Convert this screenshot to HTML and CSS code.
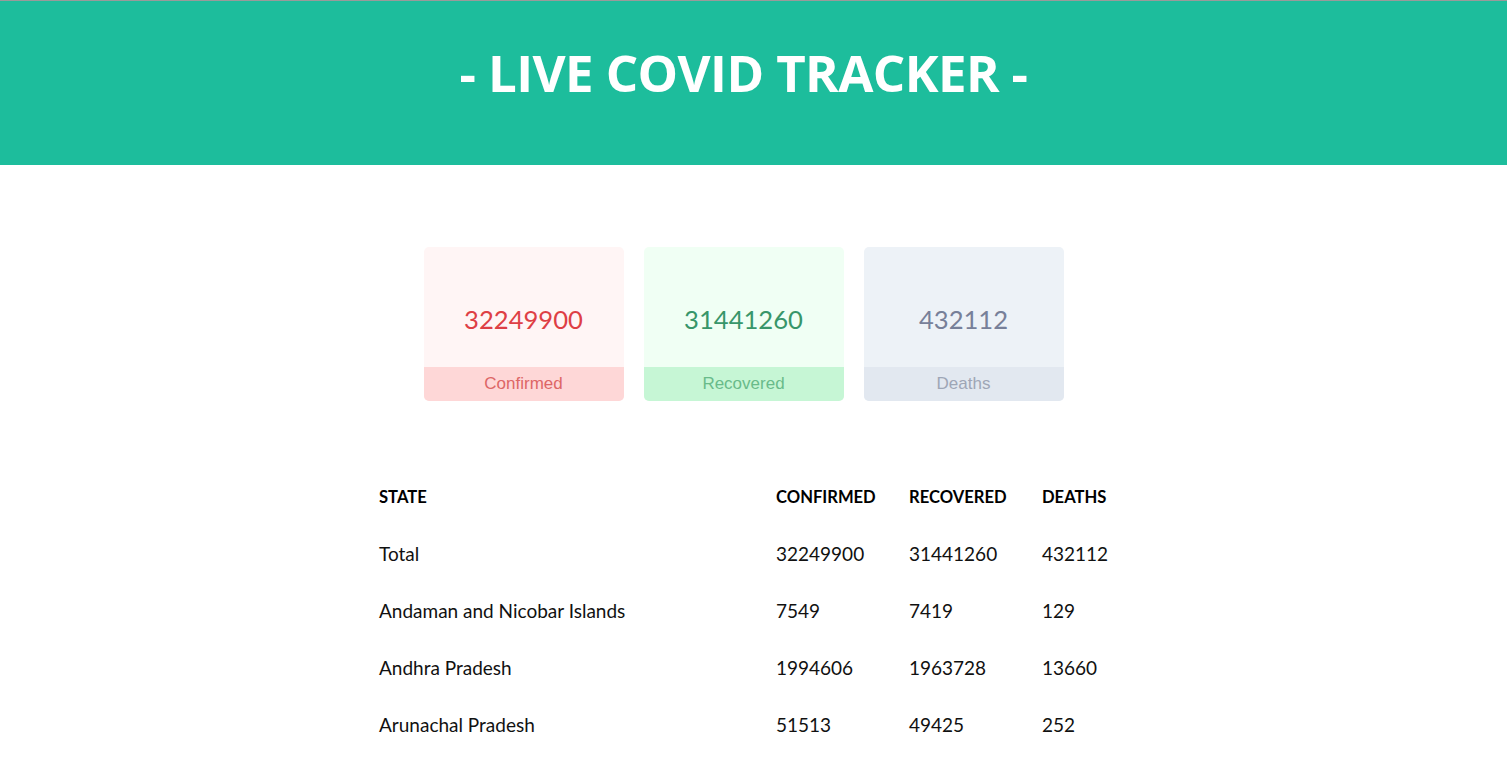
FILE: index.html
```html
<!DOCTYPE html>
<html lang="en">
<head>
<meta charset="utf-8">
<title>Live Covid Tracker</title>
<link rel="stylesheet" href="styles.css">
</head>
<body>
<header class="hero">
  <h1 class="hero-title">- LIVE COVID TRACKER -</h1>
</header>
<main class="content">
  <section class="cards">
    <div class="card card-red">
      <div class="card-value">32249900</div>
      <div class="card-label">Confirmed</div>
    </div>
    <div class="card card-green">
      <div class="card-value">31441260</div>
      <div class="card-label">Recovered</div>
    </div>
    <div class="card card-gray">
      <div class="card-value">432112</div>
      <div class="card-label">Deaths</div>
    </div>
  </section>
  <table class="states">
    <colgroup>
      <col class="col-state"><col class="col-num"><col class="col-num"><col class="col-last">
    </colgroup>
    <thead>
      <tr><th>STATE</th><th>CONFIRMED</th><th>RECOVERED</th><th>DEATHS</th></tr>
    </thead>
    <tbody>
      <tr><td>Total</td><td>32249900</td><td>31441260</td><td>432112</td></tr>
      <tr><td>Andaman and Nicobar Islands</td><td>7549</td><td>7419</td><td>129</td></tr>
      <tr><td>Andhra Pradesh</td><td>1994606</td><td>1963728</td><td>13660</td></tr>
      <tr><td>Arunachal Pradesh</td><td>51513</td><td>49425</td><td>252</td></tr>
    </tbody>
  </table>
</main>
</body>
</html>
```

FILE: styles.css
```css
html, body {
  margin: 0;
  padding: 0;
}
body {
  font-family: "Lato", "Liberation Sans", sans-serif;
  color: #111;
  background: #fff;
  border-top: 1px solid #9a9a9a;
}
.hero {
  background: #1dbd9c;
  height: 164px;
  padding-right: 20px;
  display: flex;
  align-items: flex-start;
  justify-content: center;
}
.hero-title {
  margin: 36px 0 0;
  color: #fff;
  font-family: "Open Sans", "Liberation Sans", sans-serif;
  font-weight: 700;
  font-size: 51px;
  line-height: 70px;
  letter-spacing: -0.6px;
}
.content {
  padding-right: 20px;
  padding-bottom: 20px;
  display: flex;
  flex-direction: column;
  align-items: center;
}
.cards {
  display: flex;
  gap: 20px;
  margin-top: 82px;
}
.card {
  width: 200px;
  height: 154px;
  border-radius: 5px;
  overflow: hidden;
  display: flex;
  flex-direction: column;
}
.card-value {
  flex: 1;
  display: flex;
  align-items: flex-end;
  justify-content: center;
  padding-bottom: 33px;
  font-size: 25.6px;
  line-height: 30px;
}
.card-label {
  height: 34px;
  display: flex;
  align-items: center;
  justify-content: center;
  font-family: "Liberation Sans", Arial, sans-serif;
  font-size: 17px;
}
.card-red { background: #fff5f5; }
.card-red .card-value { color: #de3f45; }
.card-red .card-label { background: #fed7d7; color: #dd6666; }
.card-green { background: #f0fff4; }
.card-green .card-value { color: #38966a; }
.card-green .card-label { background: #c6f6d5; color: #69bb8a; }
.card-gray { background: #edf2f7; }
.card-gray .card-value { color: #778099; }
.card-gray .card-label { background: #e2e8f0; color: #9ea6b6; }

.states {
  margin-top: 67px;
  border-collapse: collapse;
  table-layout: fixed;
  width: 729px;
  font-size: 19px;
}
.col-state { width: 397px; }
.col-num { width: 133px; }
.col-last { width: 66px; }
.states th, .states td {
  text-align: left;
  padding: 0;
  height: 57px;
  vertical-align: middle;
  white-space: nowrap;
}
.states th {
  font-weight: 700;
  font-size: 16.6px;
  color: #000;
}
.states td {
  color: #111;
  line-height: 20px;
}
```
